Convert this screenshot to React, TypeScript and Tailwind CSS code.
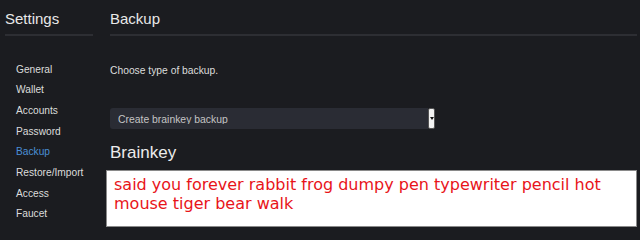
const NAV = [
  "General",
  "Wallet",
  "Accounts",
  "Password",
  "Backup",
  "Restore/Import",
  "Access",
  "Faucet",
];

export default function App() {
  return (
    <div className="flex h-[240px] w-[640px] overflow-hidden bg-[#1b1c20] font-['Liberation_Sans',Arial,sans-serif] text-[#e6e6e6]">
      {/* sidebar */}
      <div className="w-[110px] shrink-0 pl-[5px] pr-[17px]">
        <h1 className="pt-[10px] text-[15px] leading-[18px] text-[#e8e8e8]">Settings</h1>
        <div className="mt-[6px] h-[2px] bg-[#2d2e33]" />
        <ul className="mt-[23.5px] pl-[11px] text-[10.2px] leading-[20.7px]">
          {NAV.map((n) => (
            <li key={n} className={n === "Backup" ? "text-[#4a8fd6]" : "text-[#dcdcdc]"}>
              {n}
            </li>
          ))}
        </ul>
      </div>

      {/* content */}
      <div className="flex-1 pr-[5px]">
        <h2 className="pt-[10px] text-[15px] leading-[18px] text-[#e8e8e8]">Backup</h2>
        <div className="mt-[6px] h-[2px] bg-[#2d2e33]" />
        <p className="mt-[28px] text-[10.3px] leading-[14px] text-[#dcdcdc]">Choose type of backup.</p>

        <div className="mt-[30px] flex h-[21px] w-[325px] items-stretch">
          <div className="flex-1 rounded-l-[3px] bg-[#2a2c34] pl-[8px]">
            <div className="mt-[6px] h-[10px] overflow-hidden text-[10.4px] leading-[12px] text-[#c4c4c4]">
              Create brainkey backup
            </div>
          </div>
          <div className="flex w-[7px] items-center justify-center rounded-[2px] border border-[#555] bg-[#f2f2f2]">
            <div className="h-0 w-0 border-x-[2px] border-t-[3px] border-x-transparent border-t-[#111]" />
          </div>
        </div>

        <h3 className="mt-[14px] text-[17px] leading-[20px] text-[#ececec]">Brainkey</h3>

        <div className="-ml-[4px] mt-[7px] h-[57px] w-[531px] border border-[#8a8a8a] bg-white px-[7px] pt-[4px] font-['DejaVu_Sans',sans-serif] text-[16px] leading-[19px] text-[#e8141a]">
          said you forever rabbit frog dumpy pen typewriter pencil hot mouse tiger bear walk
        </div>
      </div>
    </div>
  );
}
